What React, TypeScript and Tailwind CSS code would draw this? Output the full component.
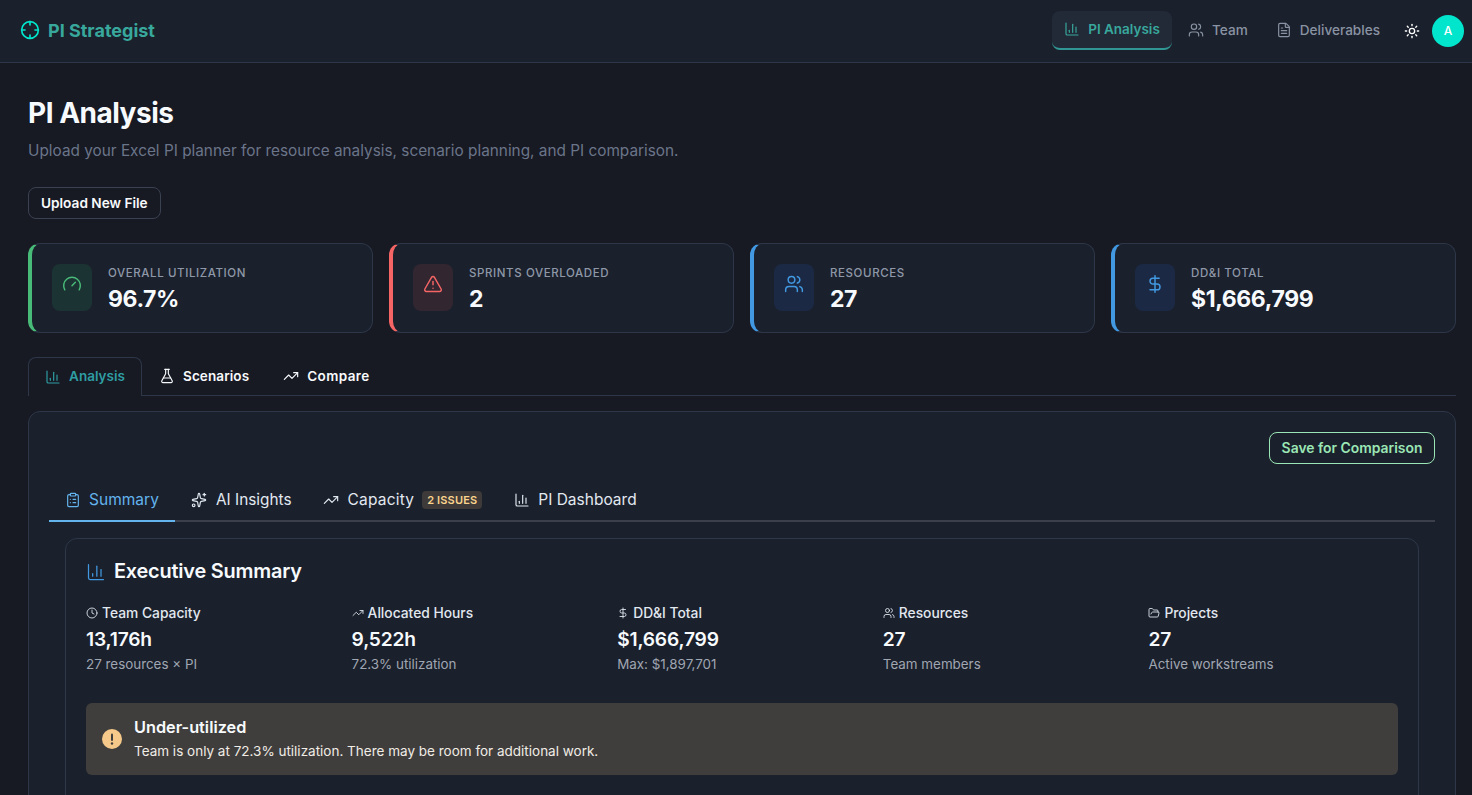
import {
  ChartColumn,
  Clock,
  ClipboardList,
  Crosshair,
  DollarSign,
  FileText,
  FlaskConical,
  FolderOpen,
  Gauge,
  Sparkles,
  Sun,
  TrendingUp,
  TriangleAlert,
  Users,
} from "lucide-react";

const kpis = [
  { label: "OVERALL UTILIZATION", value: "96.7%", Icon: Gauge, border: "border-l-[#48bb78]", box: "bg-[#1c3333]", color: "text-[#48bb78]" },
  { label: "SPRINTS OVERLOADED", value: "2", Icon: TriangleAlert, border: "border-l-[#f56565]", box: "bg-[#322630]", color: "text-[#f56565]" },
  { label: "RESOURCES", value: "27", Icon: Users, border: "border-l-[#4299e1]", box: "bg-[#1b2945]", color: "text-[#4299e1]" },
  { label: "DD&I TOTAL", value: "$1,666,799", Icon: DollarSign, border: "border-l-[#4299e1]", box: "bg-[#1b2945]", color: "text-[#4299e1]" },
];

const stats = [
  { label: "Team Capacity", value: "13,176h", note: "27 resources × PI", Icon: Clock },
  { label: "Allocated Hours", value: "9,522h", note: "72.3% utilization", Icon: TrendingUp },
  { label: "DD&I Total", value: "$1,666,799", note: "Max: $1,897,701", Icon: DollarSign },
  { label: "Resources", value: "27", note: "Team members", Icon: Users },
  { label: "Projects", value: "27", note: "Active workstreams", Icon: FolderOpen },
];

export default function App() {
  return (
    <div className="h-[795px] overflow-hidden bg-[#171923] font-['Inter',sans-serif] text-white">
      {/* Top nav */}
      <header className="flex h-[63px] items-center justify-between border-b border-[#2d3748] bg-[#1a202c] pb-[2px] pl-5 pr-2">
        <div className="flex items-center gap-2">
          <Crosshair size={20} strokeWidth={2} className="text-[#00e5cc]" />
          <span className="text-[18px] font-bold text-[#38a89d]">PI Strategist</span>
        </div>
        <nav className="flex items-center">
          <a className="flex h-[39px] w-[120px] items-center justify-center gap-2 rounded-lg border-b-2 border-[#319795] bg-[#232a37] text-[13.5px] font-semibold text-[#38a89d]">
            <ChartColumn size={16} strokeWidth={1.75} />
            PI Analysis
          </a>
          <a className="ml-4 flex items-center gap-2 text-[13.6px] font-medium text-[#8a93a3]">
            <Users size={16} strokeWidth={1.75} />
            Team
          </a>
          <a className="ml-7 flex items-center gap-2 text-[13.6px] font-medium text-[#8a93a3]">
            <FileText size={16} strokeWidth={1.75} />
            Deliverables
          </a>
          <Sun size={16} className="ml-6 mt-[2px] text-white" />
          <div className="ml-3 mt-[2px] flex h-8 w-8 items-center justify-center rounded-full bg-[#00e5cc] text-xs font-medium text-white">A</div>
        </nav>
      </header>

      <main className="pl-7 pr-4 pt-[31px]">
        <h1 className="text-[28px] font-bold leading-[38px] tracking-[-0.5px] text-[#f7fafc]">PI Analysis</h1>
        <p className="mt-[7px] text-[15.35px] leading-6 text-[#6b7589]">
          Upload your Excel PI planner for resource analysis, scenario planning, and PI comparison.
        </p>
        <button className="mt-6 h-8 rounded-lg border border-[#3a4150] px-3 text-[13.65px] font-semibold text-[#f7fafc]">
          Upload New File
        </button>

        {/* KPI cards */}
        <div className="mt-6 grid grid-cols-4 gap-4">
          {kpis.map(({ label, value, Icon, border, box, color }) => (
            <div
              key={label}
              className={`flex h-[90px] gap-4 rounded-xl border border-l-4 border-[#2d3748] ${border} bg-[#1a202c] px-5 pb-5 pt-5`}
            >
              <div className={`flex h-[47px] w-10 justify-center rounded-lg pt-[10px] ${box}`}>
                <Icon size={20} strokeWidth={1.75} className={color} />
              </div>
              <div className="pt-px">
                <div className="text-[11.5px] font-medium leading-[17px] tracking-[0.6px] text-[#8f98a8]">{label}</div>
                <div className="text-[23px] font-bold leading-[35px] tracking-[-0.4px] text-[#f7fafc]">{value}</div>
              </div>
            </div>
          ))}
        </div>

        {/* Page tabs */}
        <div className="mt-6 flex h-[39px] border-b border-[#2d3748]">
          <div className="flex h-[39px] w-[114px] items-center justify-center gap-2 rounded-t-lg border border-b-0 border-[#2d3748] bg-[#171923] pb-px text-[13.5px] font-semibold text-[#2f9ea3]">
            <ChartColumn size={16} strokeWidth={1.75} />
            Analysis
          </div>
          <div className="ml-[17px] flex items-center gap-2 text-[13.5px] font-semibold tracking-[0.1px] text-[#f7fafc]">
            <FlaskConical size={16} strokeWidth={1.75} />
            Scenarios
          </div>
          <div className="ml-[34px] flex items-center gap-2 text-[13.5px] font-semibold tracking-[0.4px] text-[#f7fafc]">
            <TrendingUp size={16} strokeWidth={1.75} />
            Compare
          </div>
        </div>

        {/* Panel */}
        <section className="mt-[15px] rounded-t-xl border border-[#2d3748] bg-[#1a202c] px-5 pt-5 pb-10">
          <div className="flex justify-end">
            <button className="h-8 w-[166px] rounded-lg border border-[#9ae6b4] text-[13.9px] font-semibold text-[#9ae6b4]">
              Save for Comparison
            </button>
          </div>

          <div className="mt-4 flex h-[42px] border-b-2 border-[#3a3f4b]">
            <div className="-mb-[2px] flex h-[42px] w-[126px] items-center justify-center gap-2 border-b-2 border-[#63b3ed] text-[15.5px] text-[#63b3ed]">
              <ClipboardList size={16} strokeWidth={1.75} />
              Summary
            </div>
            <div className="ml-4 flex items-center gap-[9px] text-[15.35px] text-[#e2e8f0]">
              <Sparkles size={16} strokeWidth={1.75} />
              AI Insights
            </div>
            <div className="ml-8 flex items-center gap-2 text-[15.5px] tracking-[0.2px] text-[#e2e8f0]">
              <TrendingUp size={16} strokeWidth={1.75} />
              Capacity
              <span className="rounded bg-[#3d3a39] px-[5px] text-[11px] font-semibold leading-[18px] tracking-[0.15px] text-[#fbd38d]">2 ISSUES</span>
            </div>
            <div className="ml-8 flex items-center gap-2 text-[15.5px] text-[#e2e8f0]">
              <ChartColumn size={16} strokeWidth={1.75} />
              PI Dashboard
            </div>
          </div>

          <div className="mx-4 mt-[16px] rounded-xl border border-[#2d3748] bg-[#1a202c] px-5 pb-10 pt-5">
            <div className="flex h-[26px] items-center gap-2">
              <ChartColumn size={20} strokeWidth={1.5} className="text-[#4299e1]" />
              <h2 className="text-[19.9px] font-semibold tracking-[-0.2px] text-[#f7fafc]">Executive Summary</h2>
            </div>

            <div className="mt-[18px] grid grid-cols-5 gap-4">
              {stats.map(({ label, value, note, Icon }) => (
                <div key={label}>
                  <div className="flex h-5 items-center gap-1 text-[13.8px] font-medium text-[#e2e8f0]">
                    <Icon size={12} strokeWidth={1.75} />
                    {label}
                  </div>
                  <div className="mt-[2px] text-[19.2px] font-semibold leading-[29px] tracking-[-0.2px] text-[#f7fafc]">{value}</div>
                  <div className="text-[13.4px] leading-[21px] text-[#a0a6b2]">{note}</div>
                </div>
              ))}
            </div>

            <div className="mt-[28px] flex h-[72px] items-center gap-3 rounded-md bg-[#403e3c] px-4">
              <svg width="20" height="20" viewBox="0 0 20 20" className="shrink-0">
                <circle cx="10" cy="10" r="10" fill="#f6c98a" />
                <rect x="9" y="4.5" width="2" height="7.5" rx="1" fill="#403e3c" />
                <circle cx="10" cy="14.5" r="1.2" fill="#403e3c" />
              </svg>
              <div>
                <div className="text-[16.3px] font-semibold leading-6 text-[#f7fafc]">Under-utilized</div>
                <div className="text-[13.5px] leading-6 text-[#f0ece6]">
                  Team is only at 72.3% utilization. There may be room for additional work.
                </div>
              </div>
            </div>
          </div>
        </section>
      </main>
    </div>
  );
}
